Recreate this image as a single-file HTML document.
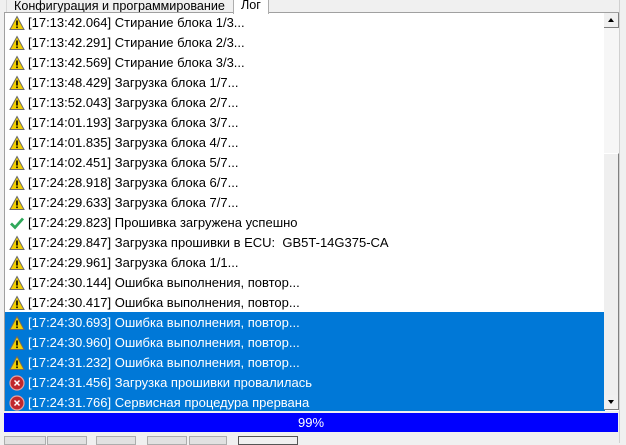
<!DOCTYPE html>
<html><head><meta charset="utf-8"><style>
body{margin:0;width:626px;height:443px;background:#f0f0f0;position:relative;overflow:hidden;font-family:"Liberation Sans","DejaVu Sans",sans-serif;font-size:13px;color:#000}
.tab1{position:absolute;left:6px;top:-4px;width:226px;height:15px;border:1px solid #d9d9d9;background:#f0f0f0;font-size:12.6px}
.tab1 span,.tab2 span{position:absolute;top:2px;left:7px;white-space:nowrap}
.tab2{position:absolute;left:233px;top:-4px;width:34px;height:17px;border:1px solid #adadad;border-bottom:none;background:#fff;z-index:3;font-size:12.6px}
.box{position:absolute;left:4px;top:12px;width:614px;height:398px;border-top:1px solid #a0a0a0;border-left:1px solid #a0a0a0;background:#fff;overflow:hidden}
.row{position:absolute;left:0;width:600px;height:20px;line-height:20px;white-space:nowrap}
.row .t{position:absolute;left:23px;top:0}
.sel{background:#0078d7;color:#fff}
.ic{position:absolute;left:4px;top:2px;width:16px;height:16px}
.sb{position:absolute;left:604px;top:13px;width:15px;height:397px;background:#f6f6f6}
.pb{position:absolute;left:4px;top:413px;width:614px;height:19px;background:#0000ff;color:#fff;text-align:center;line-height:19px}
</style></head><body>
<div class="tab1"><span>Конфигурация и программирование</span></div>
<div class="tab2"><span style="left:7px;top:1px">Лог</span></div>
<div class="box">
<svg width="0" height="0" style="position:absolute"><defs>
<g id="w"><path d="M8 1.5 L15 14.5 L1 14.5 Z" fill="#f3d000" stroke="#6b6b6b" stroke-width="1"/><rect x="7.2" y="5.5" width="1.6" height="5" fill="#000"/><rect x="7.2" y="11.5" width="1.6" height="1.6" fill="#000"/></g>
<g id="e"><circle cx="8" cy="8" r="7" fill="#c0282d" stroke="#e8a0a0" stroke-width="1.2"/><path d="M5.5 5.5 L10.5 10.5 M10.5 5.5 L5.5 10.5" stroke="#fff" stroke-width="1.5"/></g>
<g id="c"><path d="M2 8.5 L6 12.5 L14 3.5" fill="none" stroke="#2fa85a" stroke-width="2.8"/></g>
</defs></svg>
<div class="row" style="top:0"><svg class="ic"><use href="#w"/></svg><span class="t">[17:13:42.064] Стирание блока 1/3...</span></div>
<div class="row" style="top:20px"><svg class="ic"><use href="#w"/></svg><span class="t">[17:13:42.291] Стирание блока 2/3...</span></div>
<div class="row" style="top:40px"><svg class="ic"><use href="#w"/></svg><span class="t">[17:13:42.569] Стирание блока 3/3...</span></div>
<div class="row" style="top:60px"><svg class="ic"><use href="#w"/></svg><span class="t">[17:13:48.429] Загрузка блока 1/7...</span></div>
<div class="row" style="top:80px"><svg class="ic"><use href="#w"/></svg><span class="t">[17:13:52.043] Загрузка блока 2/7...</span></div>
<div class="row" style="top:100px"><svg class="ic"><use href="#w"/></svg><span class="t">[17:14:01.193] Загрузка блока 3/7...</span></div>
<div class="row" style="top:120px"><svg class="ic"><use href="#w"/></svg><span class="t">[17:14:01.835] Загрузка блока 4/7...</span></div>
<div class="row" style="top:140px"><svg class="ic"><use href="#w"/></svg><span class="t">[17:14:02.451] Загрузка блока 5/7...</span></div>
<div class="row" style="top:160px"><svg class="ic"><use href="#w"/></svg><span class="t">[17:24:28.918] Загрузка блока 6/7...</span></div>
<div class="row" style="top:180px"><svg class="ic"><use href="#w"/></svg><span class="t">[17:24:29.633] Загрузка блока 7/7...</span></div>
<div class="row" style="top:200px"><svg class="ic"><use href="#c"/></svg><span class="t">[17:24:29.823] Прошивка загружена успешно</span></div>
<div class="row" style="top:220px"><svg class="ic"><use href="#w"/></svg><span class="t">[17:24:29.847] Загрузка прошивки в ECU:&nbsp; GB5T-14G375-CA</span></div>
<div class="row" style="top:240px"><svg class="ic"><use href="#w"/></svg><span class="t">[17:24:29.961] Загрузка блока 1/1...</span></div>
<div class="row" style="top:260px"><svg class="ic"><use href="#w"/></svg><span class="t">[17:24:30.144] Ошибка выполнения, повтор...</span></div>
<div class="row" style="top:280px"><svg class="ic"><use href="#w"/></svg><span class="t">[17:24:30.417] Ошибка выполнения, повтор...</span></div>
<div class="row sel" style="top:299px;height:21px"><svg class="ic" style="top:3px"><use href="#w"/></svg><span class="t" style="top:1px">[17:24:30.693] Ошибка выполнения, повтор...</span></div>
<div class="row sel" style="top:320px"><svg class="ic"><use href="#w"/></svg><span class="t">[17:24:30.960] Ошибка выполнения, повтор...</span></div>
<div class="row sel" style="top:340px"><svg class="ic"><use href="#w"/></svg><span class="t">[17:24:31.232] Ошибка выполнения, повтор...</span></div>
<div class="row sel" style="top:360px"><svg class="ic"><use href="#e"/></svg><span class="t">[17:24:31.456] Загрузка прошивки провалилась</span></div>
<div class="row sel" style="top:380px"><svg class="ic"><use href="#e"/></svg><span class="t">[17:24:31.766] Сервисная процедура прервана</span></div>
</div>
<div class="sb">
<div style="position:absolute;left:0;top:0;width:14px;height:14px;background:#f0f0f0;border-right:1px solid #808080;border-bottom:1px solid #808080"><div style="position:absolute;left:4px;top:5px;border-left:3px solid transparent;border-right:3px solid transparent;border-bottom:4px solid #000"></div></div>
<div style="position:absolute;left:0;top:140px;width:14px;height:241px;background:#efefef;border-right:1px solid #808080;border-bottom:1px solid #808080;border-top:1px solid #fff"></div>
<div style="position:absolute;left:0;top:382px;width:14px;height:14px;background:#f0f0f0;border-right:1px solid #808080;border-bottom:1px solid #808080"><div style="position:absolute;left:4px;top:5px;border-left:3px solid transparent;border-right:3px solid transparent;border-top:4px solid #000"></div></div>
</div>
<div style="position:absolute;left:619px;top:0;width:1px;height:443px;background:#d0d0d0"></div>
<div class="pb">99%</div>
<div style="position:absolute;left:4px;top:436px;width:40px;height:7px;border:1px solid #adadad;background:#e1e1e1"></div>
<div style="position:absolute;left:47px;top:436px;width:38px;height:7px;border:1px solid #adadad;background:#e1e1e1"></div>
<div style="position:absolute;left:96px;top:436px;width:38px;height:7px;border:1px solid #adadad;background:#e1e1e1"></div>
<div style="position:absolute;left:147px;top:436px;width:38px;height:7px;border:1px solid #adadad;background:#e1e1e1"></div>
<div style="position:absolute;left:189px;top:436px;width:36px;height:7px;border:1px solid #adadad;background:#e1e1e1"></div>
<div style="position:absolute;left:238px;top:436px;width:58px;height:7px;border:1px solid #555;background:#f0f0f0"></div>
</body></html>
